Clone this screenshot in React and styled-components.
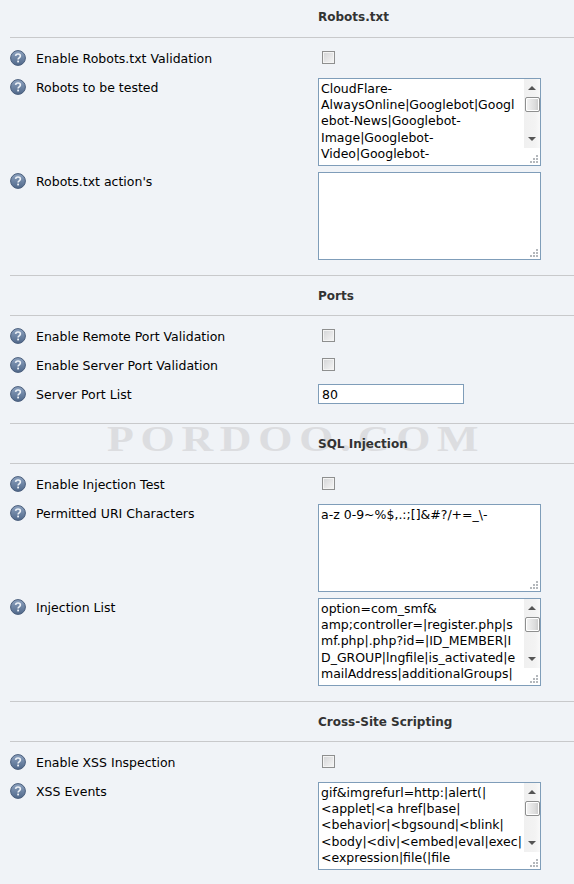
import React from "react";
import styled, { createGlobalStyle } from "styled-components";

const Global = createGlobalStyle`
  html, body { margin: 0; padding: 0; background: #f0f3f7; }
  body { font-family: "DejaVu Sans", Verdana, sans-serif; font-size: 12.5px; color: #000; }
`;

const Page = styled.div`
  position: relative;
  width: 574px;
  height: 884px;
  overflow: hidden;
  padding-left: 10px;
  box-sizing: border-box;
  background: #f0f3f7;
`;

const Watermark = styled.div`
  position: absolute;
  left: 107px;
  top: 421px;
  font-family: "Liberation Serif", serif;
  font-weight: 700;
  font-size: 36px;
  line-height: 36px;
  letter-spacing: 5.5px;
  color: #dcdde0;
  white-space: nowrap;
  transform: scaleX(1.22);
  transform-origin: left center;
`;

const Heading = styled.h3`
  position: relative;
  margin: 0;
  box-sizing: border-box;
  height: ${(p) => (p.$first ? "38px" : "41px")};
  padding: ${(p) => (p.$first ? "0 0 3px 308px" : "0 0 0 308px")};
  display: flex;
  align-items: center;
  border-top: ${(p) => (p.$first ? "none" : "1px solid #c8c9cb")};
  border-bottom: 1px solid #c8c9cb;
  font-size: 12px;
  font-weight: 700;
  color: #333;
`;

const Rows = styled.div`
  padding: 11px 0 9px;
`;

const Row = styled.div`
  display: grid;
  grid-template-columns: 308px 1fr;
  min-height: 23px;
  padding-bottom: 6px;
`;

const LabelCell = styled.div`
  display: flex;
  align-items: flex-start;
  gap: 10px;
  padding-top: 1px;
`;

const LabelText = styled.span`
  line-height: 18px;
`;

const CheckBox = styled.span`
  display: block;
  box-sizing: border-box;
  width: 13px;
  height: 13px;
  margin: 2px 0 0 4px;
  border: 1px solid #8e8f8f;
  box-shadow: inset 0 0 0 1px #f4f4f4;
  background: linear-gradient(135deg, #d3d4d6, #f6f6f6);
`;

const TextBox = styled.div`
  box-sizing: border-box;
  width: 146px;
  height: 20px;
  margin-top: -1px;
  border: 1px solid #7f9db9;
  background: #fff;
  padding: 0 3px;
  line-height: 20px;
`;

const TextArea = styled.div`
  position: relative;
  box-sizing: border-box;
  width: 223px;
  height: 88px;
  border: 1px solid #7f9db9;
  background: #fff;
  overflow: hidden;
  padding: 2px 2px;
  line-height: 16.2px;
  color: #000;
`;

const Line = styled.div`
  white-space: pre;
`;

const Grip = styled.svg`
  position: absolute;
  right: 1px;
  bottom: 1px;
  width: 12px;
  height: 12px;
`;

const ScrollBar = styled.div`
  position: absolute;
  top: 0;
  right: 0;
  width: 16px;
  height: 69px;
  background: linear-gradient(90deg, #f0f0f0, #f3f3f3 70%, #f9f9f9);
  display: flex;
  flex-direction: column;
  align-items: center;
`;

const ArrowBox = styled.div`
  height: 18px;
  flex: none;
  display: flex;
  align-items: center;
  justify-content: center;
  &:last-child { margin-top: auto; }
`;

const Arrow = styled.span`
  width: 0;
  height: 0;
  border-left: 4px solid transparent;
  border-right: 4px solid transparent;
  ${(p) => (p.$down ? "border-top: 4px solid #555;" : "border-bottom: 4px solid #555;")}
`;

const Thumb = styled.div`
  box-sizing: border-box;
  width: 15px;
  height: 15px;
  border: 1px solid #8e8f8f;
  border-radius: 2px;
  background: linear-gradient(90deg, #f4f4f4, #dcdcdc 70%, #c8c8c8);
  box-shadow: inset 0 0 0 1px #fff;
`;

const HelpIcon = () => (
  <svg width="16" height="16" viewBox="0 0 16 16" style={{ flex: "none" }}>
    <defs>
      <linearGradient id="helpFill" x1="0" y1="0" x2="0" y2="1">
        <stop offset="0" stopColor="#8ea3c0" />
        <stop offset="1" stopColor="#50688a" />
      </linearGradient>
    </defs>
    <circle cx="8" cy="8" r="7.4" fill="url(#helpFill)" stroke="#4a5e7c" strokeWidth="1" />
    <path
      d="M5.6 5.9C5.7 4.6 6.7 4 8 4c1.4 0 2.4.8 2.4 2 0 1.9-2.3 1.8-2.3 3.5"
      fill="none"
      stroke="#eef2f7"
      strokeWidth="1.6"
    />
    <rect x="7.2" y="10.6" width="1.8" height="1.8" fill="#eef2f7" />
  </svg>
);

const Area = ({ lines = [], scroll }) => (
  <TextArea>
    {lines.map((l) => (
      <Line key={l}>{l}</Line>
    ))}
    {scroll && (
      <ScrollBar>
        <ArrowBox>
          <Arrow />
        </ArrowBox>
        <Thumb />
        <ArrowBox>
          <Arrow $down />
        </ArrowBox>
      </ScrollBar>
    )}
    <Grip viewBox="0 0 12 12">
      {[[9, 3], [9, 6], [6, 6], [9, 9], [6, 9], [3, 9]].map(([x, y]) => (
        <rect key={`${x}-${y}`} x={x} y={y} width="2" height="2" fill="#b4b8bc" />
      ))}
    </Grip>
  </TextArea>
);

const Field = ({ label, children }) => (
  <Row>
    <LabelCell>
      <HelpIcon />
      <LabelText>{label}</LabelText>
    </LabelCell>
    <div>{children}</div>
  </Row>
);

export default function App() {
  return (
    <>
      <Global />
      <Page>
        <Watermark>PORDOO.COM</Watermark>
        <Heading $first>Robots.txt</Heading>
        <Rows>
          <Field label="Enable Robots.txt Validation"><CheckBox /></Field>
          <Field label="Robots to be tested">
            <Area scroll lines={["CloudFlare-", "AlwaysOnline|Googlebot|Googl", "ebot-News|Googlebot-", "Image|Googlebot-", "Video|Googlebot-"]} />
          </Field>
          <Field label="Robots.txt action's"><Area /></Field>
        </Rows>
        <Heading>Ports</Heading>
        <Rows>
          <Field label="Enable Remote Port Validation"><CheckBox /></Field>
          <Field label="Enable Server Port Validation"><CheckBox /></Field>
          <Field label="Server Port List"><TextBox>80</TextBox></Field>
        </Rows>
        <Heading>SQL Injection</Heading>
        <Rows>
          <Field label="Enable Injection Test"><CheckBox /></Field>
          <Field label="Permitted URI Characters">
            <Area lines={["a-z 0-9~%$,.:;[]&#?/+=_\\-"]} />
          </Field>
          <Field label="Injection List">
            <Area scroll lines={["option=com_smf&", "amp;controller=|register.php|s", "mf.php|.php?id=|ID_MEMBER|I", "D_GROUP|lngfile|is_activated|e", "mailAddress|additionalGroups|"]} />
          </Field>
        </Rows>
        <Heading>Cross-Site Scripting</Heading>
        <Rows>
          <Field label="Enable XSS Inspection"><CheckBox /></Field>
          <Field label="XSS Events">
            <Area scroll lines={["gif&imgrefurl=http:|alert(|", "<applet|<a href|base|", "<behavior|<bgsound|<blink|", "<body|<div|<embed|eval|exec|", "<expression|file(|file"]} />
          </Field>
        </Rows>
      </Page>
    </>
  );
}
